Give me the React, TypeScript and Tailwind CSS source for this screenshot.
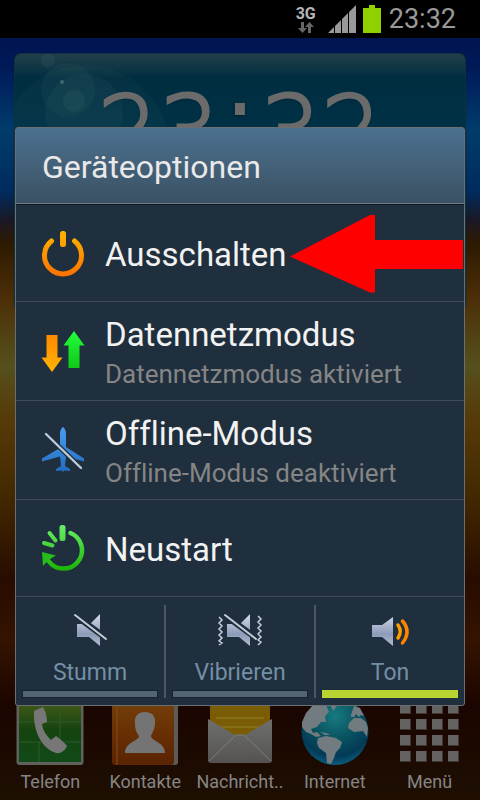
import type { ReactNode } from "react";

function PowerIcon() {
  return (
    <svg width="44" height="48" viewBox="0 0 44 48" fill="none" aria-hidden="true">
      <defs>
        <linearGradient id="power" x1="0" y1="0" x2="0" y2="48" gradientUnits="userSpaceOnUse">
          <stop offset="0" stopColor="#ffb800" />
          <stop offset="1" stopColor="#ff7000" />
        </linearGradient>
      </defs>
      <path d="M10.500 12A18.500 18.500 0 1 0 33.500 12" stroke="url(#power)" strokeWidth="5" strokeLinecap="round" />
      <rect x="19" y="2" width="6" height="16" rx="2.500" fill="url(#power)" />
    </svg>
  );
}

function DataIcon() {
  return (
    <svg width="44" height="44" viewBox="0 0 44 44" aria-hidden="true">
      <defs>
        <linearGradient id="down" x1="0" y1="0" x2="0" y2="1">
          <stop offset="0" stopColor="#ff8a00" />
          <stop offset="1" stopColor="#ffb400" />
        </linearGradient>
        <linearGradient id="up" x1="0" y1="0" x2="0" y2="1">
          <stop offset="0" stopColor="#22ff3c" />
          <stop offset="1" stopColor="#10c814" />
        </linearGradient>
      </defs>
      <path d="M5.500 6h11v22.500H21.500L11 43 .5 28.500h5z" fill="url(#down)" />
      <path d="M33 2l10.500 14.500h-5V39H27.500V16.500h-5z" fill="url(#up)" />
    </svg>
  );
}

function PlaneIcon() {
  return (
    <svg width="44" height="48" viewBox="0 0 44 48" aria-hidden="true">
      <defs>
        <linearGradient id="plane" x1="0" y1="0" x2="0" y2="1">
          <stop offset="0" stopColor="#4c9df0" />
          <stop offset="1" stopColor="#1f6cc0" />
        </linearGradient>
      </defs>
      <path
        d="M22 1c2 1.500 3 4 3 7v13l18 11.500v3L25 30.500 24 40l5 3v2l-6-.5-1 2-1-2-6 .5v-2l5-3-1-9.500L1 35.500v-3L19 22V8c0-3 1-5.500 3-7z"
        fill="url(#plane)"
      />
      <path d="M4 7l37 36" stroke="#1f2f3d" strokeWidth="5" />
      <path d="M5 8l35 34" stroke="#bccbdc" strokeWidth="2.400" strokeLinecap="round" />
    </svg>
  );
}

function RestartIcon() {
  return (
    <svg width="44" height="48" viewBox="0 0 44 48" fill="none" aria-hidden="true">
      <defs>
        <linearGradient id="restart" x1="0" y1="0" x2="0" y2="48" gradientUnits="userSpaceOnUse">
          <stop offset="0" stopColor="#6cf06c" />
          <stop offset="1" stopColor="#16b400" />
        </linearGradient>
      </defs>
      <path d="M29.500 9A18.500 18.500 0 1 1 7.500 37" stroke="url(#restart)" strokeWidth="4.500" strokeLinecap="round" />
      <path d="M1 28l14 3.500L7.500 36 2 42z" fill="#25bd1a" />
      <rect x="18.500" y="1" width="6" height="16" rx="2.500" fill="url(#restart)" />
      <path d="M8.500 9l6 7.500M3 19l8.500 2.500" stroke="url(#restart)" strokeWidth="4" strokeLinecap="round" />
    </svg>
  );
}

function SpeakerGradient() {
  return (
    <defs>
      <linearGradient id="speaker" x1="0" y1="2" x2="0" y2="34" gradientUnits="userSpaceOnUse">
        <stop offset="0" stopColor="#d2d9ea" />
        <stop offset=".6" stopColor="#8d9bb8" />
        <stop offset="1" stopColor="#b4c0d4" />
      </linearGradient>
    </defs>
  );
}

function MuteIcon() {
  return (
    <svg width="48" height="36" viewBox="0 0 48 36" aria-hidden="true">
      <SpeakerGradient />
      <path d="M11 11h13L34 1v32L23 24H11z" fill="url(#speaker)" />
      <path d="M6 0l38 28" stroke="#1f2f3d" strokeWidth="6" />
      <path d="M9 2l31 24" stroke="#c3cedb" strokeWidth="2" strokeLinecap="round" />
    </svg>
  );
}

function VibrateIcon() {
  return (
    <svg width="48" height="36" viewBox="0 0 48 36" fill="none" aria-hidden="true">
      <SpeakerGradient />
      <path d="M11 11h13L34 1v32L23 24H11z" fill="url(#speaker)" />
      <path d="M6 0l38 28" stroke="#1f2f3d" strokeWidth="6" />
      <path d="M9 2l31 24" stroke="#c3cedb" strokeWidth="2" strokeLinecap="round" />
      <path
        d="M3 4l3 3-3 3 3 3-3 3 3 3-3 3 3 3-3 3 3 2-3 2M42 3l3 3-3 3 3 3-3 3 3 3-3 3 3 3-3 3 3 2-3 3"
        stroke="#c3cedb"
        strokeWidth="1.500"
      />
    </svg>
  );
}

function SoundIcon() {
  return (
    <svg width="48" height="36" viewBox="0 0 48 36" fill="none" aria-hidden="true">
      <SpeakerGradient />
      <path d="M6 12h10L27 4v29L16 24H6z" fill="url(#speaker)" />
      <path d="M32 12q4.500 6.500 0 13" stroke="#ff9c00" strokeWidth="3.500" strokeLinecap="round" />
      <path d="M36.500 8q9 10.500 0 22" stroke="#ff8400" strokeWidth="3.500" strokeLinecap="round" />
    </svg>
  );
}

function PhoneApp() {
  return (
    <svg width="68" height="68" viewBox="0 0 68 68" aria-hidden="true">
      <defs>
        <linearGradient id="phone" x1="0" y1="0" x2="0" y2="1">
          <stop offset="0" stopColor="#455c18" />
          <stop offset=".5" stopColor="#14430f" />
          <stop offset="1" stopColor="#124b18" />
        </linearGradient>
      </defs>
      <rect x=".5" y="0" width="67" height="67" rx="3" fill="#5f615d" />
      <rect x="3" y="2" width="62" height="62" fill="url(#phone)" />
      <path d="M3 24h62M3 44h62M23 44v20M44 2v42" stroke="#2f5a2c" strokeWidth="1" />
      <path
        d="M18 13l9-4c3 5 4 10 4 15l-5 2c1 7 5 12 9 16l5-4c4 3 8 6 11 10-2 5-7 8-11 7-13-4-23-20-22-42z"
        fill="#777"
      />
    </svg>
  );
}

function ContactsApp() {
  return (
    <svg width="68" height="68" viewBox="0 0 68 68" aria-hidden="true">
      <defs>
        <linearGradient id="contacts" x1="0" y1="0" x2="0" y2="1">
          <stop offset="0" stopColor="#73410a" />
          <stop offset=".5" stopColor="#693004" />
          <stop offset="1" stopColor="#5a2302" />
        </linearGradient>
      </defs>
      <rect x="4" y="0" width="63" height="67" rx="3" fill="#5d5b5a" />
      <rect x="1" y="0" width="62" height="67" rx="3" fill="url(#contacts)" />
      <path d="M6 0v67" stroke="#80501c" strokeWidth="1" />
      <path
        d="M34 14c8 0 11 5 10 12-.5 6-3 9-4 12 0 5 14 6 14 17H14c0-11 14-12 14-17-2-3-4-6-4-12-1-7 2-12 10-12z"
        fill="#747474"
      />
    </svg>
  );
}

function MailApp() {
  return (
    <svg width="68" height="68" viewBox="0 0 68 68" aria-hidden="true">
      <defs>
        <linearGradient id="envelope" x1="0" y1="0" x2="0" y2="1">
          <stop offset="0" stopColor="#6f6f6e" />
          <stop offset="1" stopColor="#545351" />
        </linearGradient>
      </defs>
      <path d="M4 0h60v45H4z" fill="#7a5c04" />
      <path d="M10 20h48M10 29h48" stroke="#94802c" strokeWidth="1" />
      <path d="M2 21l27 16h10l27-16v41q0 3-3 3H5q-3 0-3-3z" fill="url(#envelope)" />
      <path d="M3 63l27-26h8l27 26" stroke="#7d7d7d" strokeWidth="1" fill="none" />
    </svg>
  );
}

function GlobeApp() {
  return (
    <svg width="68" height="68" viewBox="0 0 68 68" aria-hidden="true">
      <defs>
        <radialGradient id="ocean" cx="34" cy="18" r="50" gradientUnits="userSpaceOnUse">
          <stop offset="0" stopColor="#187a80" />
          <stop offset=".5" stopColor="#08505f" />
          <stop offset=".8" stopColor="#033a56" />
          <stop offset="1" stopColor="#0a6080" />
        </radialGradient>
      </defs>
      <circle cx="34" cy="33.500" r="33.500" fill="url(#ocean)" />
      <g fill="#727b80">
        <path d="M1 24l4-9 7-8 13 0 3 7-4 4 1 6-5 0-4 5-6 2 2 4 4-1 4 4-5 1-5-3-5-2-4-5z" />
        <path d="M17 40l8-2 10 2 6 4-2 6-4 4-2 6-3 6-4-1-1-10-7-5-2-5z" />
        <path d="M48 25l5-5 7 0 5 4 2 6-1 9-4-6-9 1-6-4z" />
        <path d="M50 17l3-9 6 2 4 8-3-1-2 2-3-3-2 3-3 0zM30 8l4-3 2 3-4 5zM19 34l6 1 4 2-5 0z" />
      </g>
    </svg>
  );
}

function GridApp() {
  const steps = [0, 1, 2, 3];
  return (
    <svg width="68" height="68" viewBox="0 0 68 68" aria-hidden="true">
      {steps.map((row) =>
        steps.map((col) => (
          <g key={`${row}${col}`}>
            <rect x={4 + col * 16} y={5 + row * 16} width="11" height="11" fill="#3d3835" />
            <rect x={4 + col * 16} y={5 + row * 16} width="10" height="10" fill="#656361" />
          </g>
        )),
      )}
    </svg>
  );
}

function StatusBar() {
  return (
    <header className="flex h-[38px] items-center justify-end bg-black pr-6 text-[#999]">
      <div className="mr-3 flex flex-col items-center">
        <span className="text-base leading-4 font-bold text-[#b5b5b5]">3G</span>
        <svg width="16" height="11" viewBox="0 0 16 11" fill="#666" aria-hidden="true">
          <path d="M3 0h3v6h3l-4.500 5L0 6h3zM10 11h3V5h3l-4.500-5L7 5h3z" />
        </svg>
      </div>
      <svg className="mr-[7px]" width="28" height="28" viewBox="0 0 28 28" fill="#999" aria-hidden="true">
        <path d="M0 28l6-6v6zM7 21l6-6v13H7zM14 14l6-6v20h-6zM21 7l7-7v28h-7z" />
      </svg>
      <svg className="mr-2" width="18" height="28" viewBox="0 0 18 28" fill="#91d000" aria-hidden="true">
        <path d="M6 0h6v3h6v25H0V3h6z" />
      </svg>
      <time className="text-[27px] leading-8">23:32</time>
    </header>
  );
}

function ClockWidget() {
  return (
    <section className="relative mx-[14px] mt-[15px] h-[258px] rounded-md border border-[#0b3440] bg-linear-to-b from-[#002b3d] to-[#00405c] shadow">
      <div className="absolute inset-x-0 top-0 h-[22px] rounded-t-md bg-linear-to-b from-[#213f4a] to-[#032f41]" />
      <svg className="absolute inset-0" width="220" height="100" fill="#7fa8a0" aria-hidden="true">
        <circle cx="53" cy="36" r="27" fillOpacity=".06" />
        <circle cx="69" cy="59" r="39" fillOpacity=".06" />
        <circle cx="59" cy="47" r="11" fillOpacity=".08" />
        <circle cx="33" cy="7" r="7" fillOpacity=".08" />
        <circle cx="47" cy="28" r="2" fillOpacity=".4" />
        <circle cx="70" cy="96" r="85" fillOpacity=".04" />
      </svg>
      <div className="relative flex justify-center pt-[22px] font-['DejaVu_Sans',sans-serif] text-[96px] leading-[112px] text-[#6b6b6b] text-shadow-md">
        <span className="font-extralight [-webkit-text-stroke:3px_#6b6b6b]">23</span>
        <span className="-mt-3 px-1">:</span>
        <span className="font-extralight [-webkit-text-stroke:3px_#6b6b6b]">32</span>
      </div>
    </section>
  );
}

const apps: { label: string; icon: ReactNode }[] = [
  { label: "Telefon", icon: <PhoneApp /> },
  { label: "Kontakte", icon: <ContactsApp /> },
  { label: "Nachricht..", icon: <MailApp /> },
  { label: "Internet", icon: <GlobeApp /> },
  { label: "Menü", icon: <GridApp /> },
];

function Dock() {
  return (
    <nav className="mt-auto grid grid-cols-5 px-[3px] pb-[6px]">
      {apps.map((app) => (
        <button key={app.label} type="button" className="flex flex-col items-center gap-1 text-lg leading-6 whitespace-nowrap text-[#858585]">
          {app.icon}
          {app.label}
        </button>
      ))}
    </nav>
  );
}

function OptionRow({ icon, title, detail }: { icon: ReactNode; title: string; detail?: string }) {
  return (
    <li className="border-b border-[#3d4b57]">
      <button type="button" className={`flex w-full items-center px-[25px] text-left ${detail ? "h-[98px]" : "h-[96px]"}`}>
        <span className="mr-5 flex w-11 justify-center">{icon}</span>
        <span className={`flex flex-col ${detail ? "pt-[6px]" : "pt-[2px]"}`}>
          <span className="text-[33px] leading-[39px] text-[#f2f2f2]">{title}</span>
          {detail && <span className="text-[26px] leading-10 text-[#858585]">{detail}</span>}
        </span>
      </button>
    </li>
  );
}

function SoundMode({ icon, label, active }: { icon: ReactNode; label: string; active?: boolean }) {
  return (
    <button type="button" aria-pressed={!!active} className="flex flex-1 flex-col items-center px-[6px] pt-2 text-[23px] leading-7 text-[#748fa5]">
      <span className="mb-[10px] h-9">{icon}</span>
      {label}
      <span className={`mt-[3px] h-2 w-full border ${active ? "border-[#b7d432] bg-[#b7d432]" : "border-[#17232e] bg-[#546572]"}`} />
    </button>
  );
}

function OptionsDialog() {
  return (
    <div role="dialog" aria-labelledby="dialog-title" className="relative w-full rounded-[3px] border border-[#6b6f73] bg-[#1f2f3d]">
      <h1
        id="dialog-title"
        className="flex h-[76px] items-center border-b border-[#6f7d8a] bg-linear-to-b from-[#4b718f] to-[#3b5163] px-[26px] pt-[2px] text-[32px] leading-10 text-[#e9e9e9]"
      >
        Geräteoptionen
      </h1>
      <ul className="border-t border-[#101820]">
        <OptionRow icon={<PowerIcon />} title="Ausschalten" />
        <OptionRow icon={<DataIcon />} title="Datennetzmodus" detail="Datennetzmodus aktiviert" />
        <OptionRow icon={<PlaneIcon />} title="Offline-Modus" detail="Offline-Modus deaktiviert" />
        <OptionRow icon={<RestartIcon />} title="Neustart" />
      </ul>
      <div className="flex h-[108px] pt-2 pb-[7px]">
        <SoundMode icon={<MuteIcon />} label="Stumm" />
        <span className="w-[2px] bg-[#4a5864]" />
        <SoundMode icon={<VibrateIcon />} label="Vibrieren" />
        <span className="w-[2px] bg-[#4a5864]" />
        <SoundMode icon={<SoundIcon />} label="Ton" active />
      </div>
      <svg className="absolute top-[87px] right-px" width="173" height="78" viewBox="0 0 173 78" fill="#ff0000" aria-hidden="true">
        <path d="M0 41.500L80 0h5v25h88v29H85v23.500h-5z" />
      </svg>
    </div>
  );
}

export default function App() {
  return (
    <div className="flex min-h-screen flex-col bg-black font-[Roboto,sans-serif] [font-variant-ligatures:none]">
      <StatusBar />
      <main className="relative flex flex-1 flex-col bg-[linear-gradient(to_bottom,#001352_0%,#001a58_4%,#003c6c_12%,#002c60_20%,#1b1824_24%,#2e1a00_27%,#4c2e08_34%,#55501c_43%,#563a08_50%,#432900_60%,#280c00_71%,#341400_79%,#1a0500_88%,#1e0f02_100%)]">
        <ClockWidget />
        <Dock />
        <div className="absolute inset-0 flex items-center px-[15px] pb-[5px]">
          <OptionsDialog />
        </div>
      </main>
    </div>
  );
}
